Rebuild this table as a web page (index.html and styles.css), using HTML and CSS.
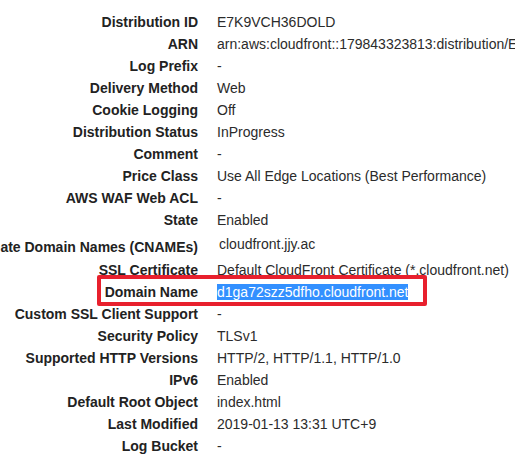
FILE: index.html
```html
<!DOCTYPE html>
<html lang="en">
<head>
<meta charset="utf-8">
<title>Distribution details</title>
<link rel="stylesheet" href="styles.css">
</head>
<body>
<div class="details">
  <div class="row"><div class="label">Distribution ID</div><div class="value">E7K9VCH36DOLD</div></div>
  <div class="row"><div class="label">ARN</div><div class="value">arn:aws:cloudfront::179843323813:distribution/E7K9VCH36DOLD</div></div>
  <div class="row"><div class="label">Log Prefix</div><div class="value">-</div></div>
  <div class="row"><div class="label">Delivery Method</div><div class="value">Web</div></div>
  <div class="row"><div class="label">Cookie Logging</div><div class="value">Off</div></div>
  <div class="row"><div class="label">Distribution Status</div><div class="value">InProgress</div></div>
  <div class="row"><div class="label">Comment</div><div class="value">-</div></div>
  <div class="row"><div class="label">Price Class</div><div class="value">Use All Edge Locations (Best Performance)</div></div>
  <div class="row"><div class="label">AWS WAF Web ACL</div><div class="value">-</div></div>
  <div class="row"><div class="label">State</div><div class="value">Enabled</div></div>
  <div class="row row-tall"><div class="label">Alternate Domain Names (CNAMEs)</div><div class="value value-list">cloudfront.jjy.ac</div></div>
  <div class="row"><div class="label">SSL Certificate</div><div class="value">Default CloudFront Certificate (*.cloudfront.net)</div></div>
  <div class="row row-marked"><div class="label">Domain Name</div><div class="value"><span class="selected">d1ga72szz5dfho.cloudfront.net</span></div><div class="mark"></div></div>
  <div class="row"><div class="label">Custom SSL Client Support</div><div class="value">-</div></div>
  <div class="row"><div class="label">Security Policy</div><div class="value">TLSv1</div></div>
  <div class="row"><div class="label">Supported HTTP Versions</div><div class="value">HTTP/2, HTTP/1.1, HTTP/1.0</div></div>
  <div class="row"><div class="label">IPv6</div><div class="value">Enabled</div></div>
  <div class="row"><div class="label">Default Root Object</div><div class="value">index.html</div></div>
  <div class="row"><div class="label">Last Modified</div><div class="value">2019-01-13 13:31 UTC+9</div></div>
  <div class="row"><div class="label">Log Bucket</div><div class="value">-</div></div>
</div>
</body>
</html>
```
FILE: styles.css
```css
html, body {
  margin: 0;
  padding: 0;
  overflow: hidden;
  background: #ffffff;
}

body {
  font-family: "Liberation Sans", Arial, sans-serif;
  font-size: 14px;
  color: #333333;
}

.details {
  margin-left: -62px;
  padding-top: 11px;
}

.row {
  position: relative;
  display: flex;
  align-items: center;
  height: 22px;
  white-space: nowrap;
}

.label {
  flex: 0 0 260px;
  text-align: right;
  font-weight: bold;
  color: #222222;
}

.value {
  margin-left: 19px;
  color: #2b2b2b;
}

.row-tall {
  height: 28px;
}

.row-tall .label {
  padding-top: 4px;
}

.value-list {
  padding-left: 2px;
  padding-bottom: 2px;
}

.selected {
  background: #3390ff;
  color: #ffffff;
}

.mark {
  position: absolute;
  left: 159px;
  top: -6px;
  width: 322px;
  height: 23px;
  border: 4px solid #e8202d;
  border-radius: 2px;
  pointer-events: none;
}
```
